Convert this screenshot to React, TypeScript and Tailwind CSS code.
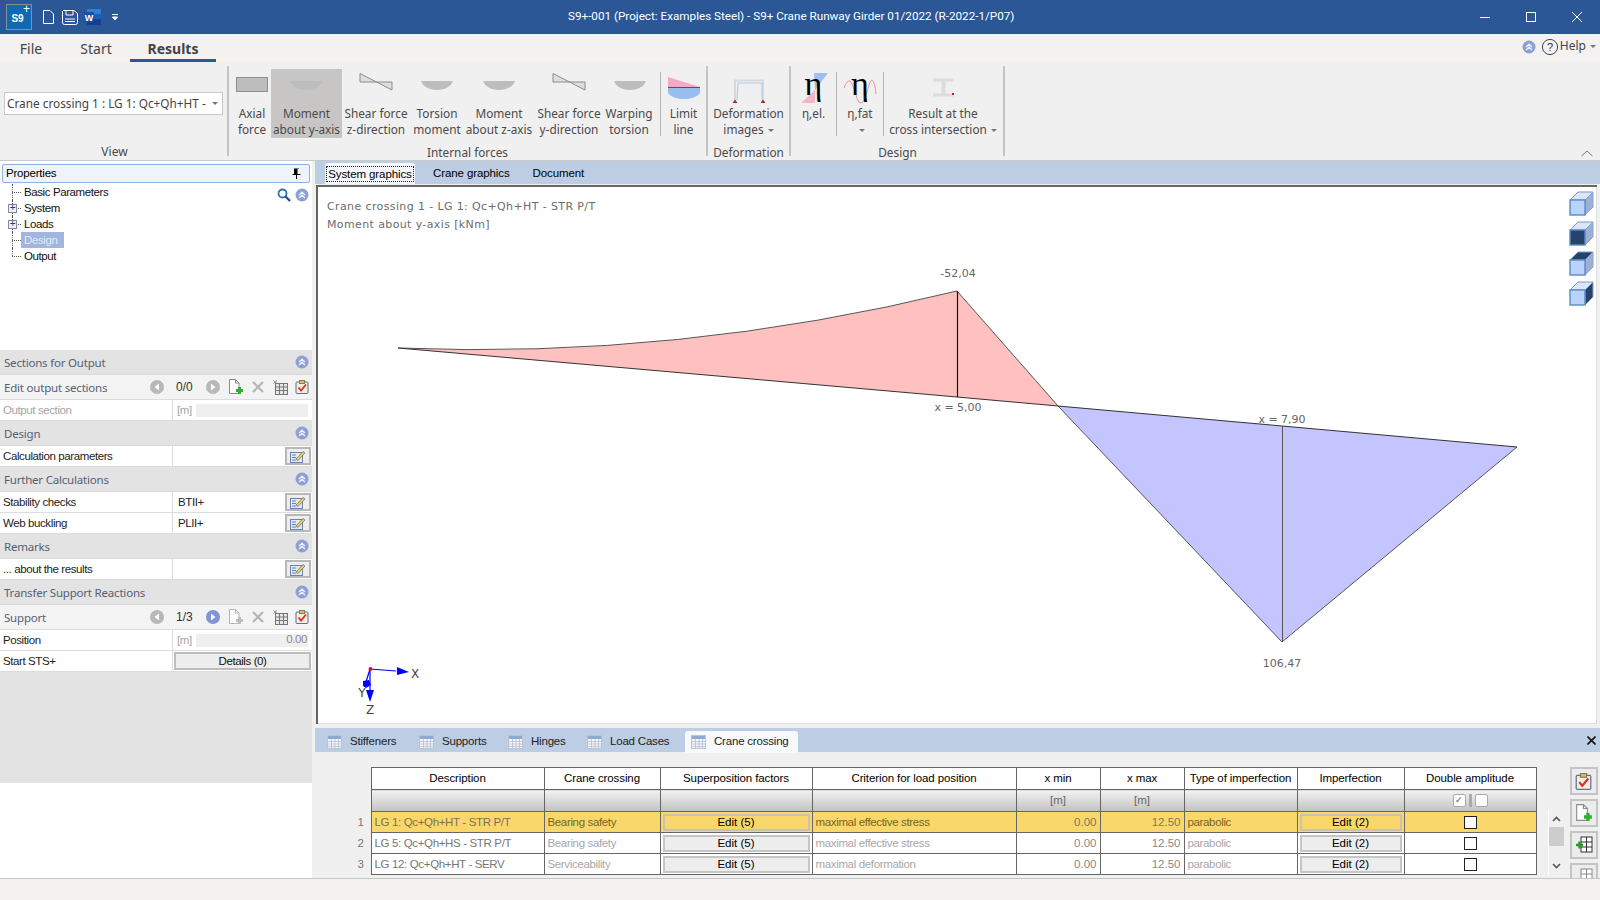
import React from "react";

const ui = "font-['Liberation_Sans',sans-serif]";
const noto = "font-['Noto_Sans',sans-serif]";

function Chev() {
  return (
    <svg width="14" height="14" viewBox="0 0 14 14" className="shrink-0">
      <circle cx="7" cy="7" r="6.5" fill="#8f9fd6" />
      <path d="M4 7 L7 4.2 L10 7 M4 10 L7 7.2 L10 10" fill="none" stroke="#eaf2ff" strokeWidth="1.4" />
    </svg>
  );
}

function Arrow({ on, left }: { on?: boolean; left?: boolean }) {
  return (
    <svg width="14" height="14" viewBox="0 0 14 14" className="shrink-0">
      <circle cx="7" cy="7" r="7" fill={on ? "#7f93d8" : "#b8b8b8"} />
      <path d={left ? "M9 3.5 L4.5 7 L9 10.5 Z" : "M5 3.5 L9.5 7 L5 10.5 Z"} fill="#fff" />
    </svg>
  );
}

function NewDoc({ on, size = 16 }: { on?: boolean; size?: number }) {
  const g = on ? "#2fae2f" : "#bdbdbd";
  return (
    <svg width={size} height={size} viewBox="0 0 16 16" className="shrink-0">
      <path d="M1.5 0.5 H7.5 L11 4 V14.5 H1.5 Z" fill="#fff" stroke={on ? "#8a8a8a" : "#b4b4b4"} />
      <path d="M7.5 0.5 V4 H11" fill="none" stroke={on ? "#8a8a8a" : "#b4b4b4"} />
      <path d="M8 11.5 H15 M11.5 8 V15" stroke={g} strokeWidth="3" />
    </svg>
  );
}

function XMark() {
  return (
    <svg width="12" height="12" viewBox="0 0 12 12" className="shrink-0">
      <path d="M1 1 L11 11 M11 1 L1 11" stroke="#b5b5b5" strokeWidth="2.2" />
    </svg>
  );
}

function Grid() {
  return (
    <svg width="15" height="15" viewBox="0 0 15 15" className="shrink-0">
      <rect x="2.5" y="3.5" width="12" height="11" fill="#e6e6e6" stroke="#777" />
      <path d="M2.5 7 H14.5 M2.5 10.5 H14.5 M6.5 3.5 V14.5 M10.5 3.5 V14.5" stroke="#777" />
      <path d="M0.5 0.5 L4 3.5 M4 0.5 L0.5 3.5" stroke="#888" />
    </svg>
  );
}

function Clip({ size = 14 }: { size?: number }) {
  return (
    <svg width={size} height={size} viewBox="0 0 14 14" className="shrink-0">
      <rect x="1" y="2" width="12" height="11.5" rx="1" fill="#f5eeda" stroke="#5b6f8e" />
      <rect x="4.5" y="0.5" width="5" height="3" fill="#d9b980" stroke="#8a7a55" />
      <path d="M3.5 7.5 L6 10.5 L11 4.5" fill="none" stroke="#d8302a" strokeWidth="1.8" />
    </svg>
  );
}

function NoteEdit() {
  return (
    <svg width="16" height="13" viewBox="0 0 16 13">
      <rect x="0.5" y="2.5" width="12" height="10" fill="#dfe9f7" stroke="#6a84ad" />
      <path d="M2 5 H6 M2 7.5 H6 M2 10 H6" stroke="#6a84ad" />
      <path d="M6 9 L13 1.5 L15 3 L8 10.5 Z" fill="#f1cb57" stroke="#555" strokeWidth="0.6" />
    </svg>
  );
}

function EditBtn() {
  return (
    <div className="w-[26px] h-[18px] border-2 border-[#b8b8b8] bg-[#ededed] flex items-center justify-center">
      <NoteEdit />
    </div>
  );
}

function Section({ title }: { title: string }) {
  return (
    <div className="h-[25px] shrink-0 flex items-center justify-between bg-[#e3e3e3] border-b border-[#d9d9d9] pl-[4px] pr-[3px]">
      <span className={`${noto} pt-[1px] text-[11.5px] tracking-[-0.2px] text-[#566073]`}>{title}</span>
      <Chev />
    </div>
  );
}

function Row({ label, value, dim, children }: { label: string; value?: string; dim?: boolean; children?: React.ReactNode }) {
  return (
    <div className={`${ui} h-[21px] shrink-0 flex bg-white border-b border-[#dcdcdc] text-[11.5px] tracking-[-0.4px]`}>
      <div className={`w-[173px] shrink-0 pl-[3px] pt-[1px] flex items-center border-r border-[#dcdcdc] ${dim ? "text-[#a5a5a5]" : "text-[#222]"}`}>{label}</div>
      <div className="flex-1 flex items-center justify-between text-[#222] pl-[4px] pr-[1px]">
        {value && <span className="pt-[2px] pl-[1px]">{value}</span>}
        {children}
      </div>
    </div>
  );
}

function ToolRow({ label, count, nextOn, docOn }: { label: string; count: string; nextOn?: boolean; docOn?: boolean }) {
  return (
    <div className="h-[25px] shrink-0 flex items-center bg-[#f3f3f3] border-b border-[#dcdcdc]">
      <span className={`${noto} w-[150px] pl-[4px] pt-[1px] text-[11.5px] tracking-[-0.2px] text-[#566073]`}>{label}</span>
      <Arrow left />
      <span className={`${ui} ml-[12px] w-[18px] text-[12px] text-[#333]`}>{count}</span>
      <span className="ml-[12px]"><Arrow on={nextOn} /></span>
      <span className="ml-[8px]"><NewDoc on={docOn} /></span>
      <span className="ml-[8px]"><XMark /></span>
      <span className="ml-[9px]"><Grid /></span>
      <span className="ml-[7px]"><Clip /></span>
    </div>
  );
}

function Disabled({ value }: { value?: string }) {
  return (
    <div className="flex-1 flex items-center pr-[3px]">
      <span className="text-[#a5a5a5] w-[18px] pt-[1px]">[m]</span>
      <div className="flex-1 ml-[1px] h-[13px] bg-[#efefef] flex items-center justify-end pr-[1px] text-[#8a8a8a]">{value}</div>
    </div>
  );
}

function TreeItem({ label, selected, plus, last }: { label: string; selected?: boolean; plus?: boolean; last?: boolean }) {
  return (
    <div className="h-[16px] flex items-center relative">
      <div className={`absolute left-[12px] top-0 border-l border-dotted border-[#555] ${last ? "h-[8px]" : "h-[16px]"}`} />
      <div className="absolute left-[12px] top-[8px] w-[9px] border-t border-dotted border-[#555]" />
      {plus && (
        <div className="absolute left-[8px] top-[3.5px] w-[9px] h-[9px] border border-[#7d8aa0] bg-[#eef2f8] flex items-center justify-center text-[#233a70] text-[10px] leading-none">+</div>
      )}
      <span className={`ml-[21px] px-[3px] h-[16px] leading-[16px] ${selected ? "bg-[#a1b5de] text-[#e3eaf7] w-[43px]" : "text-[#111]"}`}>{label}</span>
    </div>
  );
}

function RibbonBtn({ l1, l2, w, left, active, children, caret }: { l1: string; l2?: string; w: string; left: number; active?: boolean; children?: React.ReactNode; caret?: boolean }) {
  const width = parseInt(w.replace(/\D/g, ""), 10);
  return (
    <div className={`${w} h-[69px] shrink-0 flex flex-col items-center ${active ? "bg-[#c8c6c4]" : ""}`}>
      <svg width={width} height={36} viewBox={`${left} 69 ${width} 36`} className="shrink-0 overflow-visible">
        {children}
      </svg>
      <div className={`${noto} -mt-[0.5px] text-[11.8px] leading-[16px] text-[#4a4a4a] text-center whitespace-nowrap`}>
        <div>{l1}</div>
        <div>
          {l2}
          {caret && <span className="inline-block ml-[4px] mb-[2px] border-x-[3px] border-x-transparent border-t-[3px] border-t-[#777]" />}
        </div>
      </div>
    </div>
  );
}

const Sep = () => <div className="w-px h-[64px] mt-[3px] bg-[#b8b8b8] shrink-0" />;

function Half({ x }: { x: number }) {
  return <path d={`M${x} 81 H${x + 32} C${x + 28} 93 ${x + 4} 93 ${x} 81 Z`} fill="#bdbdbd" />;
}

function Shear({ x }: { x: number }) {
  return <path d={`M${x} 73.5 V82 H${x + 32} V90 Z`} fill="#dedede" stroke="#8c8c8c" />;
}

function Cube({ dark }: { dark?: "front" | "top" | "side" }) {
  const d = "#28436b";
  return (
    <svg width="25" height="25" viewBox="0 0 25 25">
      <path d="M1 9 L9 1 H24 L16 9 Z" fill={dark === "top" ? d : "#dbe6fb"} stroke="#6f9ad0" />
      <path d="M16 9 L24 1 V16 L16 24 Z" fill={dark === "side" ? d : "#9db0d2"} stroke="#88a4cc" />
      <rect x="1" y="9" width="15" height="15" fill={dark === "front" ? d : "#b9d3fc"} stroke="#5a8ac8" strokeWidth="1.4" />
    </svg>
  );
}

function TabIcon() {
  return (
    <svg width="15" height="14" viewBox="0 0 15 14" className="shrink-0">
      <rect x="0.5" y="0.5" width="14" height="13" fill="#f4f6fa" stroke="#b9c4d6" />
      <rect x="1" y="1" width="13" height="3" fill="#8ea9d2" />
      <path d="M1 6.5 H14 M1 9 H14 M1 11.5 H14 M4.5 4 V13 M8 4 V13 M11.5 4 V13" stroke="#b5bfce" strokeWidth="0.8" />
    </svg>
  );
}

function LowerTab({ label, active, cls }: { label: string; active?: boolean; cls: string }) {
  return (
    <div className={`${cls} h-[22px] mt-[3px] shrink-0 flex items-center gap-[8px] px-[6px] ${active ? "bg-[#f7f9fc] rounded-t-[3px]" : ""}`}>
      <TabIcon />
      <span className={`${ui} text-[11.5px] tracking-[-0.2px] whitespace-nowrap text-[#222]`}>{label}</span>
    </div>
  );
}

function EditCell({ label, hi }: { label: string; hi?: boolean }) {
  return (
    <div className={`mx-auto w-[calc(100%-4px)] h-[17px] border-2 flex items-center justify-center text-black ${hi ? "border-[#c9c4b0] bg-[#fad76a]" : "border-[#c6c6c6] bg-[#ededed]"}`}>
      <span className="pt-[1px]">{label}</span>
    </div>
  );
}

const rows = [
  { n: 1, d: "LG 1: Qc+Qh+HT - STR P/T", c: "Bearing safety", m: "maximal effective stress", hi: true },
  { n: 2, d: "LG 5: Qc+Qh+HS - STR P/T", c: "Bearing safety", m: "maximal effective stress", hi: false },
  { n: 3, d: "LG 12: Qc+Qh+HT - SERV", c: "Serviceability", m: "maximal deformation", hi: false },
];

function SideBtn({ children, cut }: { children: React.ReactNode; cut?: boolean }) {
  return (
    <div className={`w-[28px] ${cut ? "h-[27px]" : "h-[28px]"} shrink-0 border-2 border-[#c4c4c4] bg-[#ececec] flex items-center justify-center`}>
      {children}
    </div>
  );
}

function RowIcon({ plus }: { plus?: boolean }) {
  return (
    <svg width="18" height="18" viewBox="0 0 18 18">
      <rect x="6" y="1" width="11" height="15" fill="#fff" stroke={plus ? "#333" : "#888"} />
      <path d="M6 6 H17 M6 11 H17 M11.5 1 V16" stroke={plus ? "#333" : "#888"} />
      {plus && <path d="M1 9 H8 M4.5 5.5 V12.5" stroke="#2a9a2a" strokeWidth="2.4" />}
    </svg>
  );
}

export default function App() {
  const th = "border border-[#666] text-center font-normal text-black pt-[1px] tracking-[-0.1px]";
  const unit = "border border-[#666] bg-gradient-to-b from-[#f2f2f2] to-[#c2c2c2] text-center text-[#666]";
  const td = "border border-[#666] px-[3px] overflow-hidden whitespace-nowrap";
  const tx = "pt-[1px] tracking-[-0.35px]";
  return (
    <div className="w-[1600px] h-[900px] flex flex-col overflow-hidden bg-[#f0f0f0]">
      {/* title bar */}
      <div className="h-[34px] shrink-0 bg-[#2b5797] flex items-center text-white">
        <div className="w-[568px] shrink-0 flex items-center">
          <div className="ml-[6px] w-[26px] h-[26px] bg-[#0f68b2] border border-[#8a8f96] relative flex items-center justify-center pt-[3px] pr-[3px]">
            <span className={`${ui} text-[10px] font-bold leading-none`}>S9</span>
            <span className={`${ui} absolute right-[1px] top-[-2px] text-[12px] leading-none`}>+</span>
          </div>
          <svg width="11" height="14" viewBox="0 0 11 14" className="ml-[11px]">
            <path d="M0.5 0.5 H7 L10.5 4 V13.5 H0.5 Z" fill="none" stroke="#fff" />
          </svg>
          <svg width="16" height="15" viewBox="0 0 16 15" className="ml-[8px]">
            <path d="M1.5 0.5 H12 L15.5 3.5 V12.5 Q15.5 14.5 13.5 14.5 H2.5 Q0.5 14.5 0.5 12.5 V1.5 Z" fill="none" stroke="#fff" />
            <path d="M4 1 V5 H11 V1 M3 9 H13 M3 11.5 H13" fill="none" stroke="#fff" />
          </svg>
          <svg width="17" height="16" viewBox="0 0 17 16" className="ml-[6px]">
            <rect x="3" y="0" width="14" height="16" fill="#2f7fd6" />
            <rect x="3" y="5" width="14" height="5" fill="#1d5fb8" />
            <rect x="3" y="10" width="14" height="6" fill="#123f8e" />
            <rect x="0" y="3" width="10" height="10" fill="#1a4fa3" />
            <text x="5" y="11.5" textAnchor="middle" fontSize="9" fontWeight="bold" fill="#fff" fontFamily="Liberation Sans">W</text>
          </svg>
          <svg width="6" height="7" viewBox="0 0 6 7" className="ml-[11px]">
            <path d="M0 0.5 H6 M0.5 3 H5.5 L3 6 Z" stroke="#fff" fill="#fff" strokeWidth="1" />
          </svg>
        </div>
        <span className="font-['Roboto',sans-serif] text-[11.7px] whitespace-nowrap">S9+-001 (Project: Examples Steel) - S9+ Crane Runway Girder 01/2022 (R-2022-1/P07)</span>
        <div className="flex-1 flex justify-end items-center gap-[36px] pr-[18px]">
          <svg width="10" height="10" viewBox="0 0 10 10"><path d="M0 5.5 H10" stroke="#fff" /></svg>
          <svg width="10" height="10" viewBox="0 0 10 10"><rect x="0.5" y="0.5" width="9" height="9" fill="none" stroke="#fff" /></svg>
          <svg width="10" height="10" viewBox="0 0 10 10"><path d="M0 0 L10 10 M10 0 L0 10" stroke="#fff" /></svg>
        </div>
      </div>

      {/* tab row */}
      <div className={`${noto} h-[28px] shrink-0 bg-[#f3f2f1] flex items-stretch text-[#444] text-[14px]`}>
        <div className="w-[62px] flex items-center justify-center"><span>File</span></div>
        <div className="w-[68px] flex items-center justify-center"><span>Start</span></div>
        <div className="w-[86px] flex items-center justify-center pt-[3px] border-b-[3px] border-[#2b5797] font-bold"><span>Results</span></div>
        <div className="flex-1 flex items-center justify-end pr-[4px] pb-[3px]">
          <Chev />
          <svg width="18" height="18" viewBox="0 0 18 18" className="ml-[5px]">
            <circle cx="9" cy="9" r="7.6" fill="none" stroke="#444" />
            <text x="9" y="13" textAnchor="middle" fontSize="11" fill="#333" fontFamily="Liberation Sans">?</text>
          </svg>
          <span className="ml-[1px] text-[12px] pb-[1px]">Help</span>
          <span className="ml-[4px] border-x-[3px] border-x-transparent border-t-[3px] border-t-[#777]" />
        </div>
      </div>

      {/* ribbon */}
      <div className="h-[99px] shrink-0 border-b border-[#c9c9c9] bg-[#f0f0f0] flex py-[4px] relative">
        <div className="w-[229px] h-[90px] shrink-0 border-r-2 border-[#c4c4c4] flex flex-col items-center relative">
          <div className={`${noto} mt-[26px] ml-[4px] self-start w-[219px] h-[23px] border border-[#c8c8c8] bg-white flex items-center pl-[2px] pt-[1px] text-[11.8px] text-[#444] whitespace-nowrap overflow-hidden`}>
            <span className="flex-1 overflow-hidden">Crane crossing 1 : LG 1: Qc+Qh+HT -</span>
            <span className="mr-[4px] ml-[2px] mb-[2px] shrink-0 border-x-[3px] border-x-transparent border-t-[3px] border-t-[#777]" />
          </div>
          <div className={`${noto} absolute top-[78.5px] w-full text-center pl-[2px] text-[12px] leading-[14px] text-[#4a4a4a]`}>View</div>
        </div>

        <div className="w-[479px] h-[90px] shrink-0 border-r-2 border-[#c4c4c4] relative">
          <div className="flex pt-[3px] pl-[4px]">
            <RibbonBtn l1="Axial" l2="force" w="w-[38px]" left={233}>
              <rect x="236.5" y="77.5" width="31" height="14" fill="#bdbdbd" stroke="#8f8f8f" />
            </RibbonBtn>
            <RibbonBtn l1="Moment" l2="about y-axis" w="w-[71px]" left={271} active>
              <Half x={290} />
            </RibbonBtn>
            <RibbonBtn l1="Shear force" l2="z-direction" w="w-[68px]" left={342}>
              <Shear x={360} />
            </RibbonBtn>
            <RibbonBtn l1="Torsion" l2="moment" w="w-[54px]" left={410}>
              <Half x={421} />
            </RibbonBtn>
            <RibbonBtn l1="Moment" l2="about z-axis" w="w-[70px]" left={464}>
              <Half x={483} />
            </RibbonBtn>
            <RibbonBtn l1="Shear force" l2="y-direction" w="w-[70px]" left={534}>
              <Shear x={553} />
            </RibbonBtn>
            <RibbonBtn l1="Warping" l2="torsion" w="w-[50px]" left={604}>
              <Half x={614} />
            </RibbonBtn>
            <div className="w-[6px] shrink-0" />
            <Sep />
            <RibbonBtn l1="Limit" l2="line" w="w-[45px]" left={661}>
              <path d="M668 77 V87 H700 Z" fill="#f4a9c4" />
              <path d="M668 87.5 H700" stroke="#555" strokeWidth="1" />
              <path d="M668 88 H700 V93 C694 101 674 101 668 93 Z" fill="#98bdee" />
            </RibbonBtn>
          </div>
          <div className={`${noto} absolute top-[78.5px] left-0 w-full text-center text-[11.8px] leading-[14px] text-[#4a4a4a]`}>Internal forces</div>
        </div>

        <div className="w-[83px] h-[90px] shrink-0 border-r-2 border-[#c4c4c4] relative">
          <div className="pt-[3px]">
            <RibbonBtn l1="Deformation" l2="images" w="w-[81px]" left={708} caret>
              <path d="M735 100 V80.5 H763 V100" fill="none" stroke="#d9d9d9" strokeWidth="2" />
              <path d="M737 100 L738 83 H762 L762 100" fill="none" stroke="#a9d0f5" strokeWidth="1.2" />
              <path d="M732.5 103 L735 99.5 L737.5 103 Z M760.5 103 L763 99.5 L765.5 103 Z" fill="#b02a2a" />
            </RibbonBtn>
          </div>
          <div className={`${noto} absolute top-[78.5px] w-full text-center text-[11.8px] leading-[14px] text-[#4a4a4a]`}>Deformation</div>
        </div>

        <div className="w-[214px] h-[90px] shrink-0 border-r-2 border-[#c4c4c4] relative">
          <div className="flex pt-[3px]">
            <RibbonBtn l1="η,el." w="w-[45px]" left={791}>
              <path d="M814 73 H828 L815 90 Z" fill="#9fc0ec" />
              <path d="M801 103 H815 V90 Z" fill="#f5b4c8" />
              <text x="813.5" y="94.5" textAnchor="middle" fontSize="34" fill="#000" fontFamily="Liberation Serif">η</text>
            </RibbonBtn>
            <Sep />
            <RibbonBtn l1="η,fat" l2=" " w="w-[46px]" left={838} caret>
              <path d="M845 88 Q848 80 851 81 Q854 84 857 95 Q859 103 862 103 Q865 103 868 92 Q871 80 873 80 Q876 82 877 94" fill="none" stroke="#ef8f98" strokeWidth="1" />
              <text x="861" y="94.5" textAnchor="middle" fontSize="34" fill="#000" fontFamily="Liberation Serif">η</text>
            </RibbonBtn>
            <Sep />
            <RibbonBtn l1="Result at the" l2="cross intersection" w="w-[118px]" left={885} caret>
              <path d="M934 78.5 H955 V81.5 H946.5 V93.5 H955 V96.5 H934 V93.5 H942.5 V81.5 H934 Z" fill="#dcdcdc" />
              <rect x="953" y="93" width="2" height="2" fill="#e01010" />
            </RibbonBtn>
          </div>
          <div className={`${noto} absolute top-[78.5px] w-full text-center pl-[1px] text-[11.8px] leading-[14px] text-[#4a4a4a]`}>Design</div>
        </div>

        <svg width="12" height="7" viewBox="0 0 12 7" className="absolute right-[7px] bottom-[3px]">
          <path d="M0.5 6 L6 1 L11.5 6" fill="none" stroke="#777" />
        </svg>
      </div>

      {/* main */}
      <div className="h-[717px] shrink-0 flex">
        {/* left panel */}
        <div className="w-[312px] shrink-0 bg-white flex flex-col">
          <div className="bg-white px-[2px] pt-[3px] h-[22px] shrink-0">
            <div className={`${ui} h-[19px] border border-[#8fb2e4] rounded-[2px] bg-[#edf4fc] flex items-center justify-between pl-[3px] pr-[8px] text-[11.5px] tracking-[-0.2px] text-black`}>
              <span>Properties</span>
              <svg width="9" height="11" viewBox="0 0 9 11">
                <path d="M2 0.5 H7 V6 H8.5 V7 H5 V11 H4 V7 H0.5 V6 H2 Z M5.5 1 V6 H7 V1 Z" fill="#000" fillRule="evenodd" />
              </svg>
            </div>
          </div>
          <div className={`${ui} h-[167px] shrink-0 relative pt-[1px] text-[11.5px] tracking-[-0.4px]`}>
            <TreeItem label="Basic Parameters" />
            <TreeItem label="System" plus />
            <TreeItem label="Loads" plus />
            <TreeItem label="Design" selected />
            <TreeItem label="Output" last />
            <div className="absolute right-[3px] top-[5px] flex items-center gap-[4px]">
              <svg width="14" height="14" viewBox="0 0 14 14">
                <circle cx="5.5" cy="5.5" r="4" fill="none" stroke="#2f6fb3" strokeWidth="1.8" />
                <path d="M8.5 8.5 L13 13" stroke="#24558e" strokeWidth="2.4" />
              </svg>
              <Chev />
            </div>
          </div>
          <Section title="Sections for Output" />
          <ToolRow label="Edit output sections" count="0/0" docOn />
          <Row label="Output section" dim><Disabled /></Row>
          <Section title="Design" />
          <Row label="Calculation parameters"><span /><EditBtn /></Row>
          <Section title="Further Calculations" />
          <Row label="Stability checks" value="BTII+"><EditBtn /></Row>
          <Row label="Web buckling" value="PLII+"><EditBtn /></Row>
          <Section title="Remarks" />
          <Row label="... about the results"><span /><EditBtn /></Row>
          <Section title="Transfer Support Reactions" />
          <ToolRow label="Support" count="1/3" nextOn />
          <Row label="Position"><Disabled value="0.00" /></Row>
          <Row label="Start STS+">
            <div className="w-[137px] h-[18px] -ml-[3px] pt-[1px] border-2 border-[#bdbdbd] bg-[#ededed] flex items-center justify-center text-[#111]">Details (0)</div>
          </Row>
          <div className="h-[111px] shrink-0 bg-[#e3e3e3]" />
          <div className="flex-1 bg-white" />
        </div>

        {/* right */}
        <div className="flex-1 flex flex-col min-w-0 bg-[#f0f0f0]">
          <div className="h-[23px] shrink-0 ml-[3px] bg-[#bccde4] flex items-end pl-[10px] text-[11.5px] tracking-[-0.1px]">
            <div className={`${ui} h-[21px] w-[90px] bg-[#f4f7fb] rounded-t-[3px] flex items-center justify-center text-black`}>
              <span className="border border-dotted border-[#222] px-[1px] leading-[14px]">System graphics</span>
            </div>
            <div className={`${ui} h-[21px] ml-[13px] pt-[1px] px-[5px] flex items-center text-black`}>Crane graphics</div>
            <div className={`${ui} h-[21px] ml-[13px] pt-[1px] px-[5px] flex items-center text-black`}>Document</div>
          </div>
          <div className="h-[539px] shrink-0 mt-[1px] ml-[4px] mr-[3px] bg-white border-l-2 border-t-2 border-[#666] relative overflow-hidden">
            <div className="absolute inset-0 border-r border-b border-[#dddddd] pointer-events-none" />
            <svg width="1279" height="537" viewBox="318 187 1279 537" className="absolute left-0 top-0">
              <path d="M398 348 Q677.5 359.5 957 291 L1058 406 L957 397 Z" fill="#ffc0c0" stroke="none" />
              <polygon points="1058,406 1282,426 1517,447 1282,642" fill="#c4c4ff" />
              <path d="M398 348 Q677.5 359.5 957 291 L1058 406 L1282 642 L1517 447" fill="none" stroke="#555" strokeWidth="1" />
              <polyline points="398,348 957,397 1058,406 1282,426 1517,447" fill="none" stroke="#333" strokeWidth="1" />
              <path d="M957.5 291 V397" stroke="#111" strokeWidth="1.2" />
              <path d="M1282.5 426 V642" stroke="#555" strokeWidth="1" />
              <g fontFamily="DejaVu Sans" fontSize="11" fill="#666" textAnchor="middle">
                <text x="958" y="277">-52,04</text>
                <text x="958" y="411">x = 5,00</text>
                <text x="1282" y="423">x = 7,90</text>
                <text x="1282" y="667">106,47</text>
              </g>
              <g fontFamily="DejaVu Sans" fontSize="11" fill="#6c6c6c" letterSpacing="0.38">
                <text x="327" y="210">Crane crossing 1 - LG 1: Qc+Qh+HT - STR P/T</text>
                <text x="327" y="228">Moment about y-axis [kNm]</text>
              </g>
              <g>
                <path d="M370 669 L396 671" stroke="#0000ff" strokeWidth="1.2" />
                <path d="M397 667 L409 672 L397 675 Z" fill="#0000ff" />
                <path d="M370 669 V692" stroke="#0000ff" strokeWidth="1.2" />
                <path d="M366 690 H374 L370 702 Z" fill="#0000ff" />
                <path d="M370 669 L366 682" stroke="#0000ff" strokeWidth="1.2" />
                <path d="M363 681 L369 680 L371 685 L366 688 L363 686 Z" fill="#0000ff" />
                <circle cx="370.5" cy="669" r="2" fill="#e01020" />
                <g fontFamily="DejaVu Sans" fontSize="12" fill="#444" textAnchor="middle">
                  <text x="415" y="678">X</text>
                  <text x="362" y="697">Y</text>
                  <text x="370" y="714">Z</text>
                </g>
              </g>
            </svg>
            <div className="absolute right-[3px] top-[4px] flex flex-col gap-[5px]">
              <Cube />
              <Cube dark="front" />
              <Cube dark="top" />
              <Cube dark="side" />
            </div>
          </div>
          <div className="h-[4px] shrink-0" />
          <div className="h-[24px] shrink-0 ml-[3px] bg-[#bccde4] flex relative">
            <LowerTab label="Stiffeners" cls="ml-[6px] w-[81px]" />
            <LowerTab label="Supports" cls="ml-[11px] w-[78px]" />
            <LowerTab label="Hinges" cls="ml-[11px] w-[68px]" />
            <LowerTab label="Load Cases" cls="ml-[11px] w-[93px]" />
            <LowerTab label="Crane crossing" cls="ml-[11px] w-[113px]" active />
            <svg width="9" height="9" viewBox="0 0 9 9" className="absolute right-[4px] top-[8px]">
              <path d="M0.5 0.5 L8.5 8.5 M8.5 0.5 L0.5 8.5" stroke="#111" strokeWidth="1.6" />
            </svg>
          </div>
          <div className="h-[126px] shrink-0 bg-[#f0f0f0] flex pt-[15px] overflow-hidden">
            <div className="w-[32px] shrink-0" />
            <table className={`${ui} w-[1192px] h-[107px] shrink-0 table-fixed border-collapse text-[11.5px]`}>
              <colgroup>
                <col className="w-[27px]" />
                <col className="w-[173px]" />
                <col className="w-[116px]" />
                <col className="w-[152px]" />
                <col className="w-[204px]" />
                <col className="w-[84px]" />
                <col className="w-[84px]" />
                <col className="w-[113px]" />
                <col className="w-[107px]" />
                <col className="w-[132px]" />
              </colgroup>
              <thead>
                <tr className="h-[22px] bg-white">
                  <th className="bg-[#f0f0f0]" />
                  {["Description", "Crane crossing", "Superposition factors", "Criterion for load position", "x min", "x max", "Type of imperfection", "Imperfection", "Double amplitude"].map((h) => (
                    <th key={h} className={th}>{h}</th>
                  ))}
                </tr>
                <tr className="h-[22px]">
                  <th className="bg-[#f0f0f0]" />
                  <th className={unit} />
                  <th className={unit} />
                  <th className={unit} />
                  <th className={unit} />
                  <th className={`${unit} font-normal`}>[m]</th>
                  <th className={`${unit} font-normal`}>[m]</th>
                  <th className={unit} />
                  <th className={unit} />
                  <th className={unit}>
                    <div className="flex items-center justify-center gap-[3px]">
                      <span className="w-[13px] h-[13px] rounded-[2px] border border-[#aaa] bg-white text-[#888] text-[9px] leading-[11px]">✓</span>
                      <span className="w-[3px] h-[13px] bg-[#aaa]" />
                      <span className="w-[13px] h-[13px] rounded-[2px] border border-[#aaa] bg-white" />
                    </div>
                  </th>
                </tr>
              </thead>
              <tbody>
                {rows.map((r) => {
                  const bg = r.hi ? "bg-[#fad76a]" : "bg-white";
                  const soft = r.hi ? "text-[#77651f]" : "text-[#a8a8a8]";
                  const num = r.hi ? "text-[#7a7a66]" : "text-[#8a8a8a]";
                  return (
                    <tr key={r.n} className="h-[21px]">
                      <td className={`bg-[#f0f0f0] text-right pr-[7px] text-[#777] ${tx}`}>{r.n}</td>
                      <td className={`${td} ${bg} ${tx} ${r.hi ? "text-[#7b7350]" : "text-[#777]"}`}>{r.d}</td>
                      <td className={`${td} ${bg} ${tx} ${soft}`}>{r.c}</td>
                      <td className={`${td} ${bg} !px-0`}><EditCell label="Edit (5)" hi={r.hi} /></td>
                      <td className={`${td} ${bg} ${tx} ${soft}`}>{r.m}</td>
                      <td className={`${td} ${bg} pt-[1px] ${num} text-right`}>0.00</td>
                      <td className={`${td} ${bg} pt-[1px] ${num} text-right`}>12.50</td>
                      <td className={`${td} ${bg} ${tx} ${soft}`}>parabolic</td>
                      <td className={`${td} ${bg} !px-0`}><EditCell label="Edit (2)" hi={r.hi} /></td>
                      <td className={`${td} ${bg}`}><div className="w-[13px] h-[13px] mx-auto border border-[#222] bg-white" /></td>
                    </tr>
                  );
                })}
              </tbody>
            </table>
            <div className="w-[11px] shrink-0" />
            <div className="w-[16px] h-[65px] mt-[43px] shrink-0 border-l border-white flex flex-col items-center">
              <svg width="9" height="6" viewBox="0 0 9 6" className="mt-[6px]"><path d="M1 5 L4.5 1.5 L8 5" fill="none" stroke="#555" strokeWidth="1.6" /></svg>
              <div className="w-[15px] h-[19px] mt-[5px] bg-[#cdcdcd]" />
              <svg width="9" height="6" viewBox="0 0 9 6" className="mt-[17px]"><path d="M1 1 L4.5 4.5 L8 1" fill="none" stroke="#555" strokeWidth="1.6" /></svg>
            </div>
            <div className="ml-[6px] flex flex-col gap-[4px] shrink-0">
              <SideBtn><Clip size={17} /></SideBtn>
              <SideBtn><NewDoc on size={18} /></SideBtn>
              <SideBtn><RowIcon plus /></SideBtn>
              <SideBtn cut><RowIcon /></SideBtn>
            </div>
          </div>
        </div>
      </div>

      {/* status bar */}
      <div className="flex-1 border-t border-[#c8c6c4] bg-[#f3f2f1]" />
    </div>
  );
}
